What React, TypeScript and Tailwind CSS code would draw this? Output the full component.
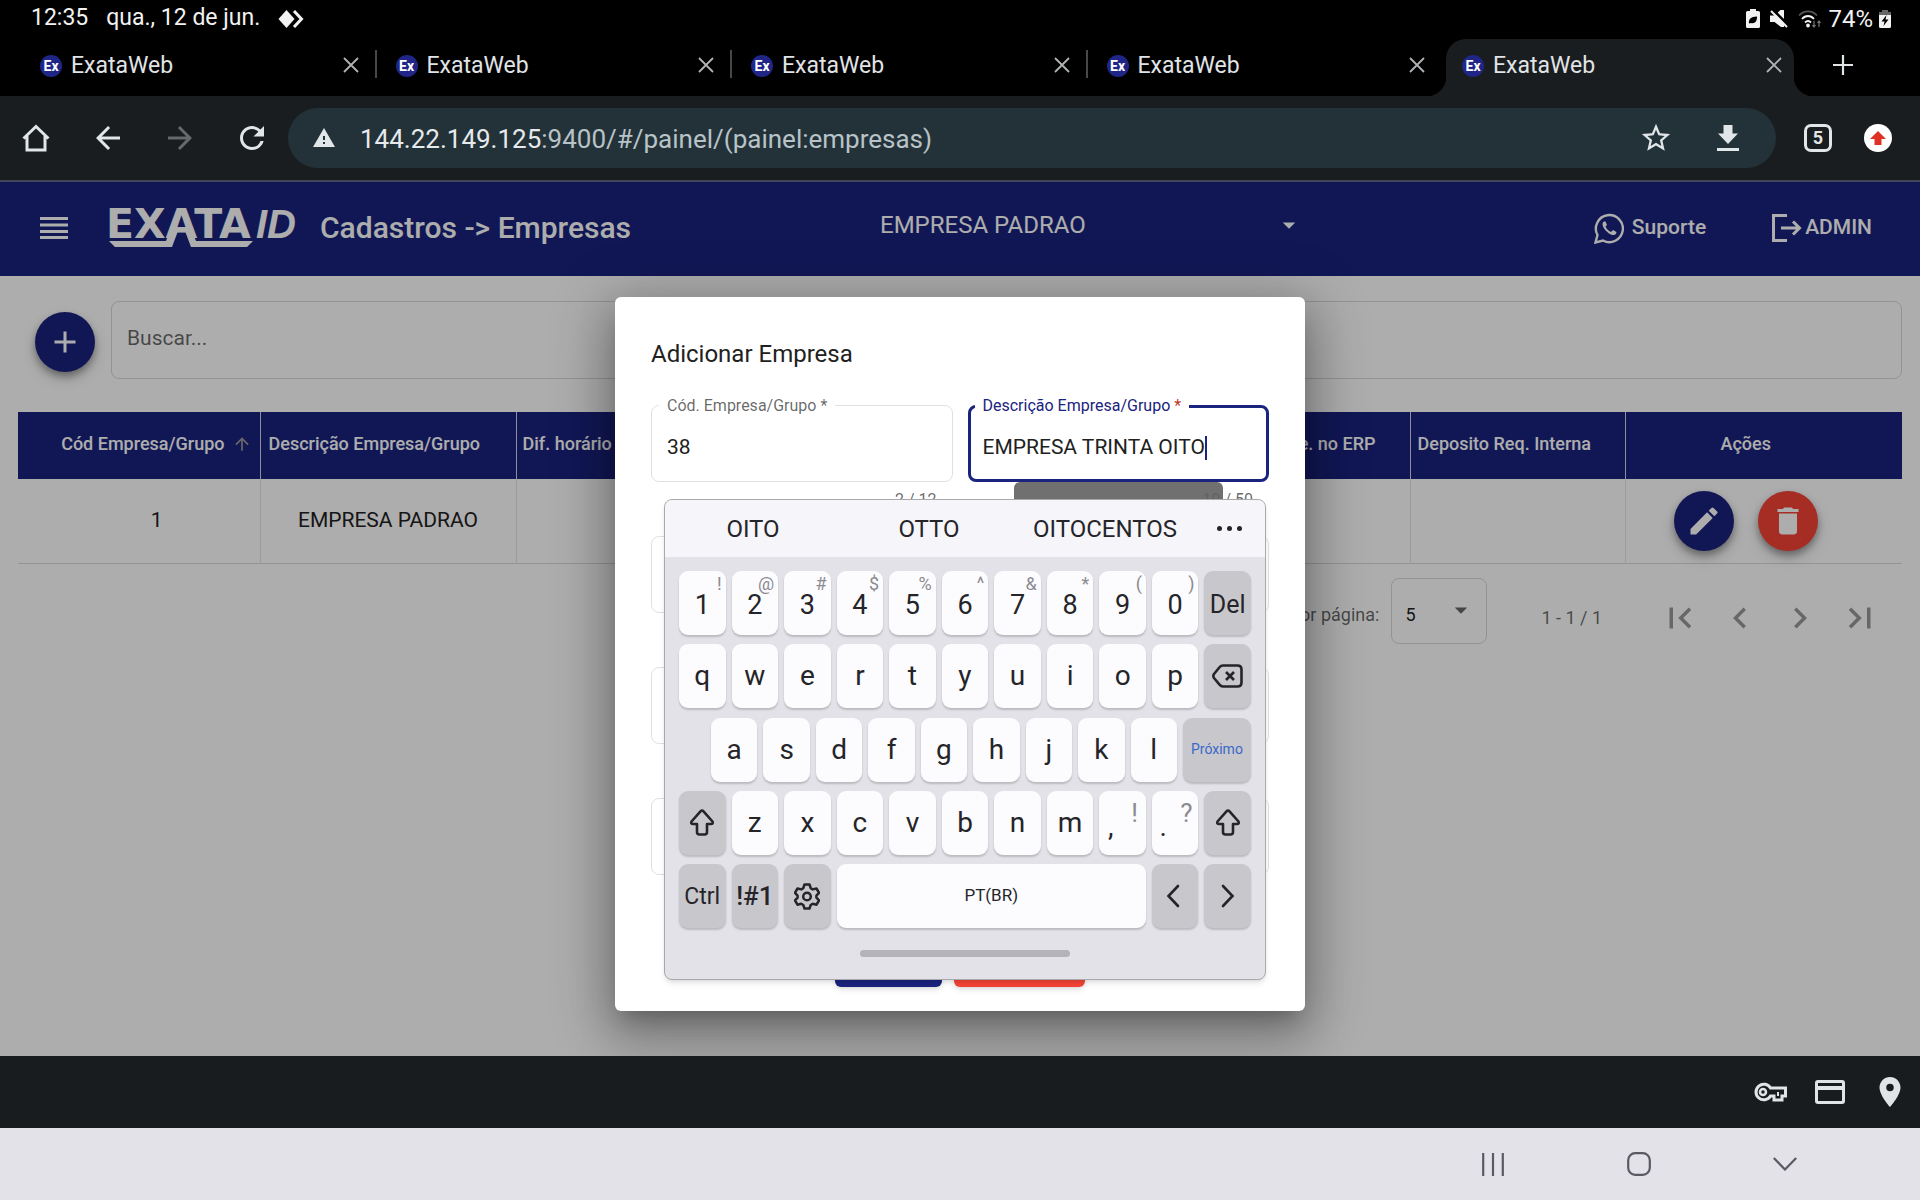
import React from "react";
import { MdArrowBack, MdArrowForward, MdWarning, MdStarBorder, MdAdd, MdEdit, MdDelete, MdFirstPage, MdLastPage, MdChevronLeft, MdChevronRight, MdArrowDropDown, MdArrowUpward, MdLocationOn, MdRefresh } from "react-icons/md";

function Favicon() {
  return (
    <span aria-hidden="true" className="flex size-[22px] shrink-0 items-center justify-center rounded-full bg-[#1f2687] text-[14px] leading-none font-bold text-white">
      Ex
    </span>
  );
}

function CloseIcon() {
  return (
    <svg width="16" height="16" viewBox="0 0 16 16" fill="none" stroke="currentColor" strokeWidth="1.8">
      <path d="M1 1l14 14M15 1L1 15" />
    </svg>
  );
}

function StatusBar() {
  return (
    <div className="flex h-9 items-center pt-px pr-[29px] pl-[31px] text-[23px] text-[#f2f2f2]">
      <span>12:35</span>
      <span className="ml-[18px]">qua., 12 de jun.</span>
      <svg className="ml-[18px]" width="26" height="20" viewBox="0 0 26 18">
        <path d="M8.500 0l8 9-8 9L0.500 9z" fill="currentColor" />
        <path d="M16 1l7.500 8-7.500 8" fill="none" stroke="currentColor" strokeWidth="3" />
      </svg>
      <div className="ml-auto flex items-center">
        <svg width="14" height="19" viewBox="0 0 14 19">
          <path d="M4 0h6v2h2.500a1.500 1.500 0 0 1 1.500 1.500v14a1.500 1.500 0 0 1-1.500 1.500h-11A1.500 1.500 0 0 1 0 17.500v-14A1.500 1.500 0 0 1 1.500 2H4z" fill="currentColor" />
          <path d="M3 14.500c-.5-4 1.500-7 8-7 .3 5-2.500 7.500-6 6.500z" fill="#000" />
        </svg>
        <svg className="ml-[10px]" width="18" height="18" viewBox="0 0 18 18">
          <path d="M0 5.500h4.500l6-5.500H14v17h-3L4.500 12H0z" fill="currentColor" />
          <path d="M2-1l18 18" stroke="#000" strokeWidth="3" />
          <path d="M1 1l16 16" stroke="currentColor" strokeWidth="2" />
        </svg>
        <svg className="ml-[10px]" width="24" height="18" viewBox="0 0 24 18" fill="none" stroke="currentColor" strokeWidth="1.800">
          <path d="M1 5.500C6 0 14 0 19 5.500" stroke="#555" />
          <path d="M4 9c3.500-4 8.500-4 12 0M7 12.500c2-2 4-2 6 0" />
          <circle cx="10" cy="15.500" r="1" />
          <path d="M16 11v6M14.500 15l1.500 2 1.500-2M21 17v-6M19.500 13l1.500-2 1.500 2" stroke="#777" strokeWidth="1.200" />
        </svg>
        <span className="ml-[6px] text-[24px]">74%</span>
        <svg className="ml-[6px]" width="12" height="18" viewBox="0 0 12 18">
          <path d="M3 0h6v2h3v4H0V2h3z" fill="#666" />
          <path d="M0 5h12v11.500a1.500 1.500 0 0 1-1.500 1.500h-9A1.500 1.500 0 0 1 0 16.500z" fill="currentColor" />
          <path d="M7.500 5L2.500 11.500H5.500L4.500 16 9.500 9.500H6.500z" fill="#000" />
        </svg>
      </div>
    </div>
  );
}

function BrowserTab({ active, divider }: { active?: boolean; divider?: boolean }) {
  return (
    <div className={active ? "relative flex h-[57px] w-[348px] shrink-0 rounded-t-[20px] bg-[#191d1f]" : "relative flex h-[57px] min-w-0 flex-1 pr-[3px]"}>
      {active && (
        <>
          <span className="absolute bottom-0 -left-5 size-5 bg-[radial-gradient(circle_at_0_0,#000_20px,#191d1f_21px)]" />
          <span className="absolute -right-5 bottom-0 size-5 bg-[radial-gradient(circle_at_100%_0,#000_20px,#191d1f_21px)]" />
        </>
      )}
      <button className="flex h-[54px] min-w-0 flex-1 items-center gap-[9px] pl-4 text-left text-[23px] text-[#e1e4e6]">
        <Favicon />
        ExataWeb
      </button>
      <button aria-label="Fechar guia" className="flex h-[52px] w-10 items-center justify-center text-[#b0b3b5]">
        <CloseIcon />
      </button>
      {divider && <span className="mt-[11px] ml-1 h-7 w-[2px] bg-[#46494b]" />}
      {!divider && !active && <span className="w-[6px]" />}
    </div>
  );
}

function TabStrip() {
  return (
    <div className="flex h-[60px] items-end">
      <div className="flex flex-1 pl-6">
        <BrowserTab divider />
        <BrowserTab divider />
        <BrowserTab divider />
        <BrowserTab />
        <BrowserTab active />
      </div>
      <button aria-label="Nova guia" className="mr-[62px] ml-[34px] flex h-[62px] w-[30px] items-center justify-center text-[#e1e4e6]">
        <svg width="20" height="20" viewBox="0 0 20 20" stroke="currentColor" strokeWidth="2.200">
          <path d="M0 10h20M10 0v20" />
        </svg>
      </button>
    </div>
  );
}

function Toolbar() {
  return (
    <div className="flex h-[86px] items-center border-b-2 border-[#404758] bg-[#191d1f] text-[#e1e6e8]">
      <button aria-label="Início" className="flex w-[72px] justify-center">
        <svg width="28" height="28" viewBox="0 0 28 28" fill="none" stroke="currentColor" strokeWidth="3">
          <path d="M1.500 14.500L14 2.500l12.500 12M5 12v14h18V12" />
        </svg>
      </button>
      <button aria-label="Voltar" className="flex w-[72px] justify-center"><MdArrowBack size={36} /></button>
      <button aria-label="Avançar" className="flex w-[72px] justify-center text-[#66696b]"><MdArrowForward size={36} /></button>
      <button aria-label="Recarregar" className="flex w-[72px] justify-center"><MdRefresh size={36} /></button>
      <div className="flex h-[60px] min-w-0 flex-1 items-center rounded-full bg-[#233238] pl-6">
        <MdWarning size={24} className="shrink-0" />
        <div className="ml-6 min-w-0 flex-1 pt-[2px] text-[26px] text-[#b8c3c8]">
          <span className="text-[#e6eaec]">144.22.149.125</span>:9400/#/painel/(painel:empresas)
        </div>
        <button aria-label="Favoritos" className="flex w-[72px] justify-center"><MdStarBorder size={34} /></button>
        <button aria-label="Baixar" className="mr-3 flex w-[72px] justify-center">
          <svg width="22" height="26" viewBox="0 0 22 26" fill="currentColor">
            <path d="M6.500 0h9v8.500H21L11 19 1 8.500h5.500zM0 23h22v3H0z" />
          </svg>
        </button>
      </div>
      <button aria-label="Guias abertas" className="ml-[28px] flex size-[28px] items-center justify-center rounded-[7px] border-[3px] border-[#e1e6e8] text-[18px] leading-none font-bold">5</button>
      <button aria-label="Atualizar" className="mr-7 ml-8 flex size-[28px] items-center justify-center rounded-full bg-white">
        <svg width="16" height="14" viewBox="0 0 16 14"><path d="M8 0l8 8h-4.500v6h-7V8H0z" fill="#dd3224" /></svg>
      </button>
    </div>
  );
}

function Logo() {
  return (
    <div className="relative flex h-[38px] w-[190px] items-start justify-between text-white">
      <span className="font-['DejaVu_Sans'] text-[41px] leading-[31px] font-bold">EXATA</span>
      <span className="font-['Liberation_Sans'] text-[40px] leading-[31px] font-bold italic">ID</span>
      <svg className="absolute top-0 left-0" width="150" height="38" viewBox="0 0 150 38" fill="currentColor">
        <path d="M3 32h57l4-10h8l-6 16H9zM79 22h7l4 10h57l-6 6H85z" />
      </svg>
    </div>
  );
}

function AppHeader() {
  return (
    <header className="flex h-[94px] items-center bg-[#1a237e] pb-[2px] text-white">
      <button aria-label="Menu" className="ml-10">
        <svg width="28" height="22" viewBox="0 0 28 22" fill="currentColor">
          <path d="M0 0h28v3H0zM0 6.500h28v3H0zM0 13h28v3H0zM0 19h28v3H0z" />
        </svg>
      </button>
      <div className="ml-[38px]"><Logo /></div>
      <h1 className="ml-6 w-[560px] pb-[2px] text-[30px] font-medium">Cadastros -&gt; Empresas</h1>
      <button className="flex w-[424px] items-center justify-between pb-[6px] text-[24px]">
        EMPRESA PADRAO
        <MdArrowDropDown size={30} />
      </button>
      <a href="#suporte" className="ml-auto flex items-center gap-2 text-[21px] font-medium">
        <svg width="30" height="31" viewBox="0 0 30 31" fill="none" stroke="currentColor">
          <path d="M1.500 29.500l2-7.500a13.500 13.500 0 1 1 5.500 5.500z" strokeWidth="2.400" />
          <path d="M10 8.500c-2 1-2 4 .5 7.500s6.500 6.500 9.500 6c2-.5 2.500-2 2.500-3l-3.500-2-2 2c-2.500-1-4.500-3-5.500-5.500l1.500-1.500-1.500-3.500z" fill="currentColor" stroke="none" />
        </svg>
        Suporte
      </a>
      <a href="#sair" className="mr-12 ml-[66px] flex items-center gap-[3px] text-[21px] font-medium">
        <svg width="30" height="28" viewBox="0 0 30 28" fill="none" stroke="currentColor" strokeWidth="3">
          <path d="M15 1.500H1.500v25H15M9 14h18M21 7.500l6.500 6.500-6.500 6.500" />
        </svg>
        ADMIN
      </a>
    </header>
  );
}

const fab = "flex size-[60px] shrink-0 items-center justify-center rounded-full text-white shadow-[0_4px_7px_rgba(0,0,0,0.3),0_7px_14px_rgba(0,0,0,0.18)]";

function CompanyTable() {
  const th = "border-r border-white/80 px-2 pb-1 text-left font-medium";
  const td = "border-r border-black/10";
  return (
    <table className="w-full table-fixed border-collapse">
      <colgroup>
        <col className="w-[242px]" />
        <col className="w-[256px]" />
        <col />
        <col className="w-[200px]" />
        <col className="w-[215px]" />
        <col className="w-[277px]" />
      </colgroup>
      <thead>
        <tr className="h-[67px] bg-[#1a237e] text-[18px] text-white">
          <th className={th}>
            <div className="flex items-center justify-end gap-[7px]">
              Cód Empresa/Grupo
              <MdArrowUpward size={20} className="text-[#9a9a9a]" />
            </div>
          </th>
          <th className={th}>Descrição Empresa/Grupo</th>
          <th className={`${th} pl-[6px]`}>Dif. horário</th>
          <th className={`${th} pr-[34px] text-right`}>Cód. Re. no ERP</th>
          <th className={`${th} pl-[7px]`}>Deposito Req. Interna</th>
          <th className="pr-9 pb-1 text-center font-medium">Ações</th>
        </tr>
      </thead>
      <tbody>
        <tr className="h-[84px] border-b border-black/15 text-center text-[21px] text-[#212121]">
          <td className={`${td} pl-[36px]`}>1</td>
          <td className={td}>EMPRESA PADRAO</td>
          <td className={td} />
          <td className={td} />
          <td className={td} />
          <td className="pr-9">
            <div className="flex justify-center gap-6">
              <button aria-label="Editar" className={`${fab} bg-[#1a237e]`}><MdEdit size={36} /></button>
              <button aria-label="Excluir" className={`${fab} bg-[#f44336]`}><MdDelete size={36} /></button>
            </div>
          </td>
        </tr>
      </tbody>
    </table>
  );
}

function Paginator() {
  return (
    <div className="flex h-[108px] items-center justify-end pr-[11px] text-[18px] text-black/60">
      <label htmlFor="page-size" className="mb-[6px]">Itens por página:</label>
      <div className="relative mb-[14px] ml-3">
        <select id="page-size" defaultValue="5" className="h-[66px] w-24 appearance-none rounded-lg border border-black/15 bg-transparent pt-[7px] pl-[13px] text-black/90">
          <option>5</option>
          <option>10</option>
        </select>
        <MdArrowDropDown size={30} className="pointer-events-none absolute top-[17px] right-[11px]" />
      </div>
      <span className="mr-12 ml-[54px]">1 - 1 / 1</span>
      <div className="flex pr-px text-black/40">
        <button aria-label="Primeira página" className="flex w-[60px] justify-center"><MdFirstPage size={42} /></button>
        <button aria-label="Página anterior" className="flex w-[60px] justify-center"><MdChevronLeft size={42} /></button>
        <button aria-label="Próxima página" className="flex w-[60px] justify-center"><MdChevronRight size={42} /></button>
        <button aria-label="Última página" className="flex w-[60px] justify-center"><MdLastPage size={42} /></button>
      </div>
    </div>
  );
}

function Counter({ children }: { children: React.ReactNode }) {
  return <div className="h-[54px] pt-[6px] pr-4 text-right text-[16px] text-black/60">{children}</div>;
}

function BlankField({ label }: { label: string }) {
  return (
    <div className="h-[131px]">
      <input aria-label={label} className="h-[77px] w-full rounded-lg border border-black/12 px-4 text-[21px] outline-none" />
    </div>
  );
}

function CompanyDialog() {
  return (
    <form role="dialog" aria-labelledby="dialog-title" className="w-[690px] rounded-md bg-white px-9 pt-9 pb-6 shadow-[0_14px_18px_-8px_rgba(0,0,0,0.2),0_28px_46px_4px_rgba(0,0,0,0.14),0_10px_55px_10px_rgba(0,0,0,0.25)]">
      <h2 id="dialog-title" className="h-[72px] pt-[5px] text-[24px] leading-8 text-[#212121]">Adicionar Empresa</h2>
      <div className="grid grid-cols-2 gap-x-[15px]">
        <div>
          <div className="relative">
            <label htmlFor="codigo" className="absolute -top-[9px] left-2 bg-white px-2 text-[16px] leading-5 text-black/60">Cód. Empresa/Grupo *</label>
            <input id="codigo" defaultValue="38" className="h-[77px] w-full rounded-lg border border-black/12 px-[15px] pt-[7px] text-[21px] text-[#212121] outline-none" />
          </div>
          <Counter>2 / 12</Counter>
        </div>
        <div>
          <div className="relative">
            <label htmlFor="descricao" className="absolute -top-[9px] left-[7px] bg-white px-2 text-[16px] leading-5 text-[#1a237e]">
              Descrição Empresa/Grupo <span className="text-[#c0392b]">*</span>
            </label>
            <div className="flex h-[77px] items-center rounded-lg border-[3px] border-[#1a237e] pt-2 pl-3">
              <input id="descricao" defaultValue="EMPRESA TRINTA OITO" className="field-sizing-content text-[21px] text-[#212121] outline-none" />
              <span className="h-6 w-[2px] bg-[#1a237e]" />
            </div>
          </div>
          <div className="relative">
            <Counter>19 / 50</Counter>
            <div className="absolute top-0 left-[46px] h-10 w-[209px] rounded-md bg-[#616161]/90" />
          </div>
        </div>
        <BlankField label="Diferença de horário" />
        <BlankField label="Código no ERP" />
        <BlankField label="Depósito" />
        <BlankField label="Depósito de requisição" />
        <BlankField label="Requisição interna" />
        <BlankField label="Observação" />
      </div>
      <div className="mt-1 flex justify-center gap-3">
        <button type="submit" aria-label="Salvar" className="h-[54px] w-[107px] rounded-md bg-[#1a237e] shadow-md" />
        <button type="button" aria-label="Cancelar" className="h-[54px] w-[131px] rounded-md bg-[#f44336] shadow-md" />
      </div>
    </form>
  );
}

function Key({ children, hint, dark, label, className = "" }: { children: React.ReactNode; hint?: string; dark?: boolean; label?: string; className?: string }) {
  return (
    <button aria-label={label} className={`relative flex h-16 items-center justify-center rounded-[9px] text-[28px] text-[#252529] shadow-[0_2px_2px_rgba(0,0,0,0.18)] ${dark ? "bg-[#c8c7cc]" : "bg-[#fcfcff]"} ${className}`}>
      {children}
      {hint && <span className="absolute top-[3px] right-1 text-[18px] leading-5 text-[#8b8b90]">{hint}</span>}
    </button>
  );
}

function ShiftIcon() {
  return (
    <svg width="26" height="27" viewBox="0 0 26 27" fill="none" stroke="currentColor" strokeWidth="2.600" strokeLinejoin="round">
      <path d="M11.500 2.300q1.500-1.600 3 0l9 10.200q1 2.500-1.500 2.500H18v8q0 2.500-2.500 2.500h-5Q8 25.500 8 23v-8H4q-2.500 0-1.500-2.500z" />
    </svg>
  );
}

function Keyboard() {
  const symbols = ["!", "@", "#", "$", "%", "^", "&", "*", "(", ")"];
  return (
    <div className="w-[602px] overflow-hidden rounded-lg border border-[#a9a9ad] bg-[#e3e2e8] shadow-md">
      <div className="grid h-[57px] grid-cols-[176px_176px_176px_1fr] items-center bg-[#f5f5fa] text-[24px] text-[#252529]">
        <button>OITO</button>
        <button>OTTO</button>
        <button>OITOCENTOS</button>
        <button aria-label="Mais sugestões" className="flex justify-center gap-[5px]">
          <span className="size-[5px] rounded-full bg-[#252529]" />
          <span className="size-[5px] rounded-full bg-[#252529]" />
          <span className="size-[5px] rounded-full bg-[#252529]" />
        </button>
      </div>
      <div className="flex h-[371px] flex-col justify-between px-[14px] pt-[14px]">
        <div className="grid grid-cols-11 gap-[6px]">
          {"1234567890".split("").map((k, i) => <Key key={k} hint={symbols[i]}><span className="pt-1 text-[27px]">{k}</span></Key>)}
          <Key dark><span className="pt-1 text-[25px]">Del</span></Key>
        </div>
        <div className="grid grid-cols-11 gap-[6px]">
          {"qwertyuiop".split("").map((k) => <Key key={k}>{k}</Key>)}
          <Key dark label="Apagar">
            <svg width="31" height="24" viewBox="0 0 31 24" fill="none" stroke="currentColor" strokeWidth="2.600" strokeLinejoin="round">
              <path d="M11 1.500h14.500q4 0 4 4v13q0 4-4 4H11q-2 0-3.500-1.800L2 14q-1.300-2 0-4L7.500 3.300Q9 1.500 11 1.500zM14 8l8 8M22 8l-8 8" />
            </svg>
          </Key>
        </div>
        <div className="flex gap-[6px] pl-8">
          {"asdfghjkl".split("").map((k) => <Key key={k} className="flex-1">{k}</Key>)}
          <Key dark className="w-[68px]"><span className="text-[14px] text-[#3a68c8]">Próximo</span></Key>
        </div>
        <div className="grid grid-cols-11 gap-[6px]">
          <Key dark label="Shift"><ShiftIcon /></Key>
          {"zxcvbnm".split("").map((k) => <Key key={k}>{k}</Key>)}
          <Key><span className="pt-2 pr-6">,</span><span className="absolute top-2 right-2 text-[26px] leading-7 text-[#8b8b90]">!</span></Key>
          <Key><span className="pt-2 pr-6">.</span><span className="absolute top-2 right-[6px] text-[26px] leading-7 text-[#8b8b90]">?</span></Key>
          <Key dark label="Shift direito"><ShiftIcon /></Key>
        </div>
        <div className="grid grid-cols-11 gap-[6px]">
          <Key dark><span className="pt-[2px] text-[23px]">Ctrl</span></Key>
          <Key dark><span className="text-[26px] font-medium">!#1</span></Key>
          <Key dark label="Configurações">
            <svg width="26" height="27" viewBox="0 0 26 27" fill="none" stroke="currentColor" strokeWidth="2.500" strokeLinejoin="round">
              <path d="M10.500 1.500h5l1.200 3.700 2 1.200 3.800-.9 2.500 4.300-2.600 2.800v2l2.600 2.800-2.500 4.300-3.800-.9-2 1.200-1.200 3.500h-5l-1.200-3.500-2-1.200-3.800.9L1 17.400l2.600-2.800v-2L1 9.800l2.500-4.300 3.800.9 2-1.200z" />
              <circle cx="13" cy="13.500" r="3.800" />
            </svg>
          </Key>
          <Key className="col-span-6"><span className="text-[17px]">PT(BR)</span></Key>
          <Key dark label="Cursor à esquerda">
            <svg className="mr-1" width="14" height="24" viewBox="0 0 14 24" fill="none" stroke="currentColor" strokeWidth="2.600" strokeLinecap="round"><path d="M12 2L2.500 12 12 22" /></svg>
          </Key>
          <Key dark label="Cursor à direita">
            <svg width="14" height="24" viewBox="0 0 14 24" fill="none" stroke="currentColor" strokeWidth="2.600" strokeLinecap="round"><path d="M2 2l9.500 10L2 22" /></svg>
          </Key>
        </div>
      </div>
      <div className="flex h-[51px] items-center justify-center">
        <span className="h-[7px] w-[210px] rounded-full bg-[#b4b3b8]" />
      </div>
    </div>
  );
}

function AutofillBar() {
  return (
    <div className="flex h-[72px] items-center justify-end bg-[#181c1f] text-[#e1e4e6]">
      <button aria-label="Senhas" className="flex w-[60px] justify-center">
        <svg width="34" height="20" viewBox="0 0 34 20" fill="none" stroke="currentColor" strokeWidth="3">
          <path d="M17.500 6a7.800 7.800 0 1 0 0 8H21v4h8v-4h3.500V6z" />
          <circle cx="10" cy="10" r="3" strokeWidth="2.500" />
          <path d="M25 10v4" strokeWidth="2" />
        </svg>
      </button>
      <button aria-label="Formas de pagamento" className="flex w-[60px] justify-center">
        <svg width="30" height="24" viewBox="0 0 30 24" fill="none" stroke="currentColor" strokeWidth="3">
          <rect x="1.500" y="1.500" width="27" height="21" rx="1.500" />
          <path d="M1 8h28" strokeWidth="4" />
        </svg>
      </button>
      <button aria-label="Endereços" className="flex w-[60px] justify-center"><MdLocationOn size={36} /></button>
    </div>
  );
}

function NavigationBar() {
  return (
    <nav className="flex h-[72px] items-center justify-end bg-[#e3e2e8] pr-[62px] text-[#5a5a62]">
      <button aria-label="Recentes" className="flex w-[146px] justify-center">
        <svg width="22" height="23" viewBox="0 0 22 23" stroke="currentColor" strokeWidth="2.200"><path d="M1.200 0v23M11 0v23M20.800 0v23" /></svg>
      </button>
      <button aria-label="Início" className="flex w-[146px] justify-center">
        <svg width="24" height="24" viewBox="0 0 24 24" fill="none" stroke="currentColor" strokeWidth="2.200"><rect x="1.200" y="1.200" width="21.600" height="21.600" rx="7" /></svg>
      </button>
      <button aria-label="Ocultar teclado" className="flex w-[146px] justify-center">
        <svg width="24" height="14" viewBox="0 0 24 14" fill="none" stroke="currentColor" strokeWidth="2.200"><path d="M.8 1L12 12.500 23.200 1" /></svg>
      </button>
    </nav>
  );
}

export default function App() {
  return (
    <div className="flex min-h-screen flex-col bg-black font-[Roboto,sans-serif]">
      <StatusBar />
      <TabStrip />
      <Toolbar />
      <div className="relative flex-1 overflow-hidden bg-white">
        <AppHeader />
        <main className="px-[18px] pt-[25px]">
          <div className="flex items-center gap-4 pb-[33px] pl-[17px]">
            <button aria-label="Adicionar" className={`${fab} mt-1 bg-[#1a237e]`}><MdAdd size={36} /></button>
            <input aria-label="Buscar" placeholder="Buscar..." className="h-[78px] min-w-0 flex-1 rounded-lg border border-black/15 px-[15px] pb-1 text-[21px] placeholder:text-black/60" />
          </div>
          <CompanyTable />
          <Paginator />
        </main>
        <div className="absolute inset-0 flex items-start justify-center bg-black/32 pt-[115px]">
          <CompanyDialog />
        </div>
        <div className="absolute inset-x-0 top-[317px] flex justify-center pl-[10px]">
          <Keyboard />
        </div>
      </div>
      <AutofillBar />
      <NavigationBar />
    </div>
  );
}
